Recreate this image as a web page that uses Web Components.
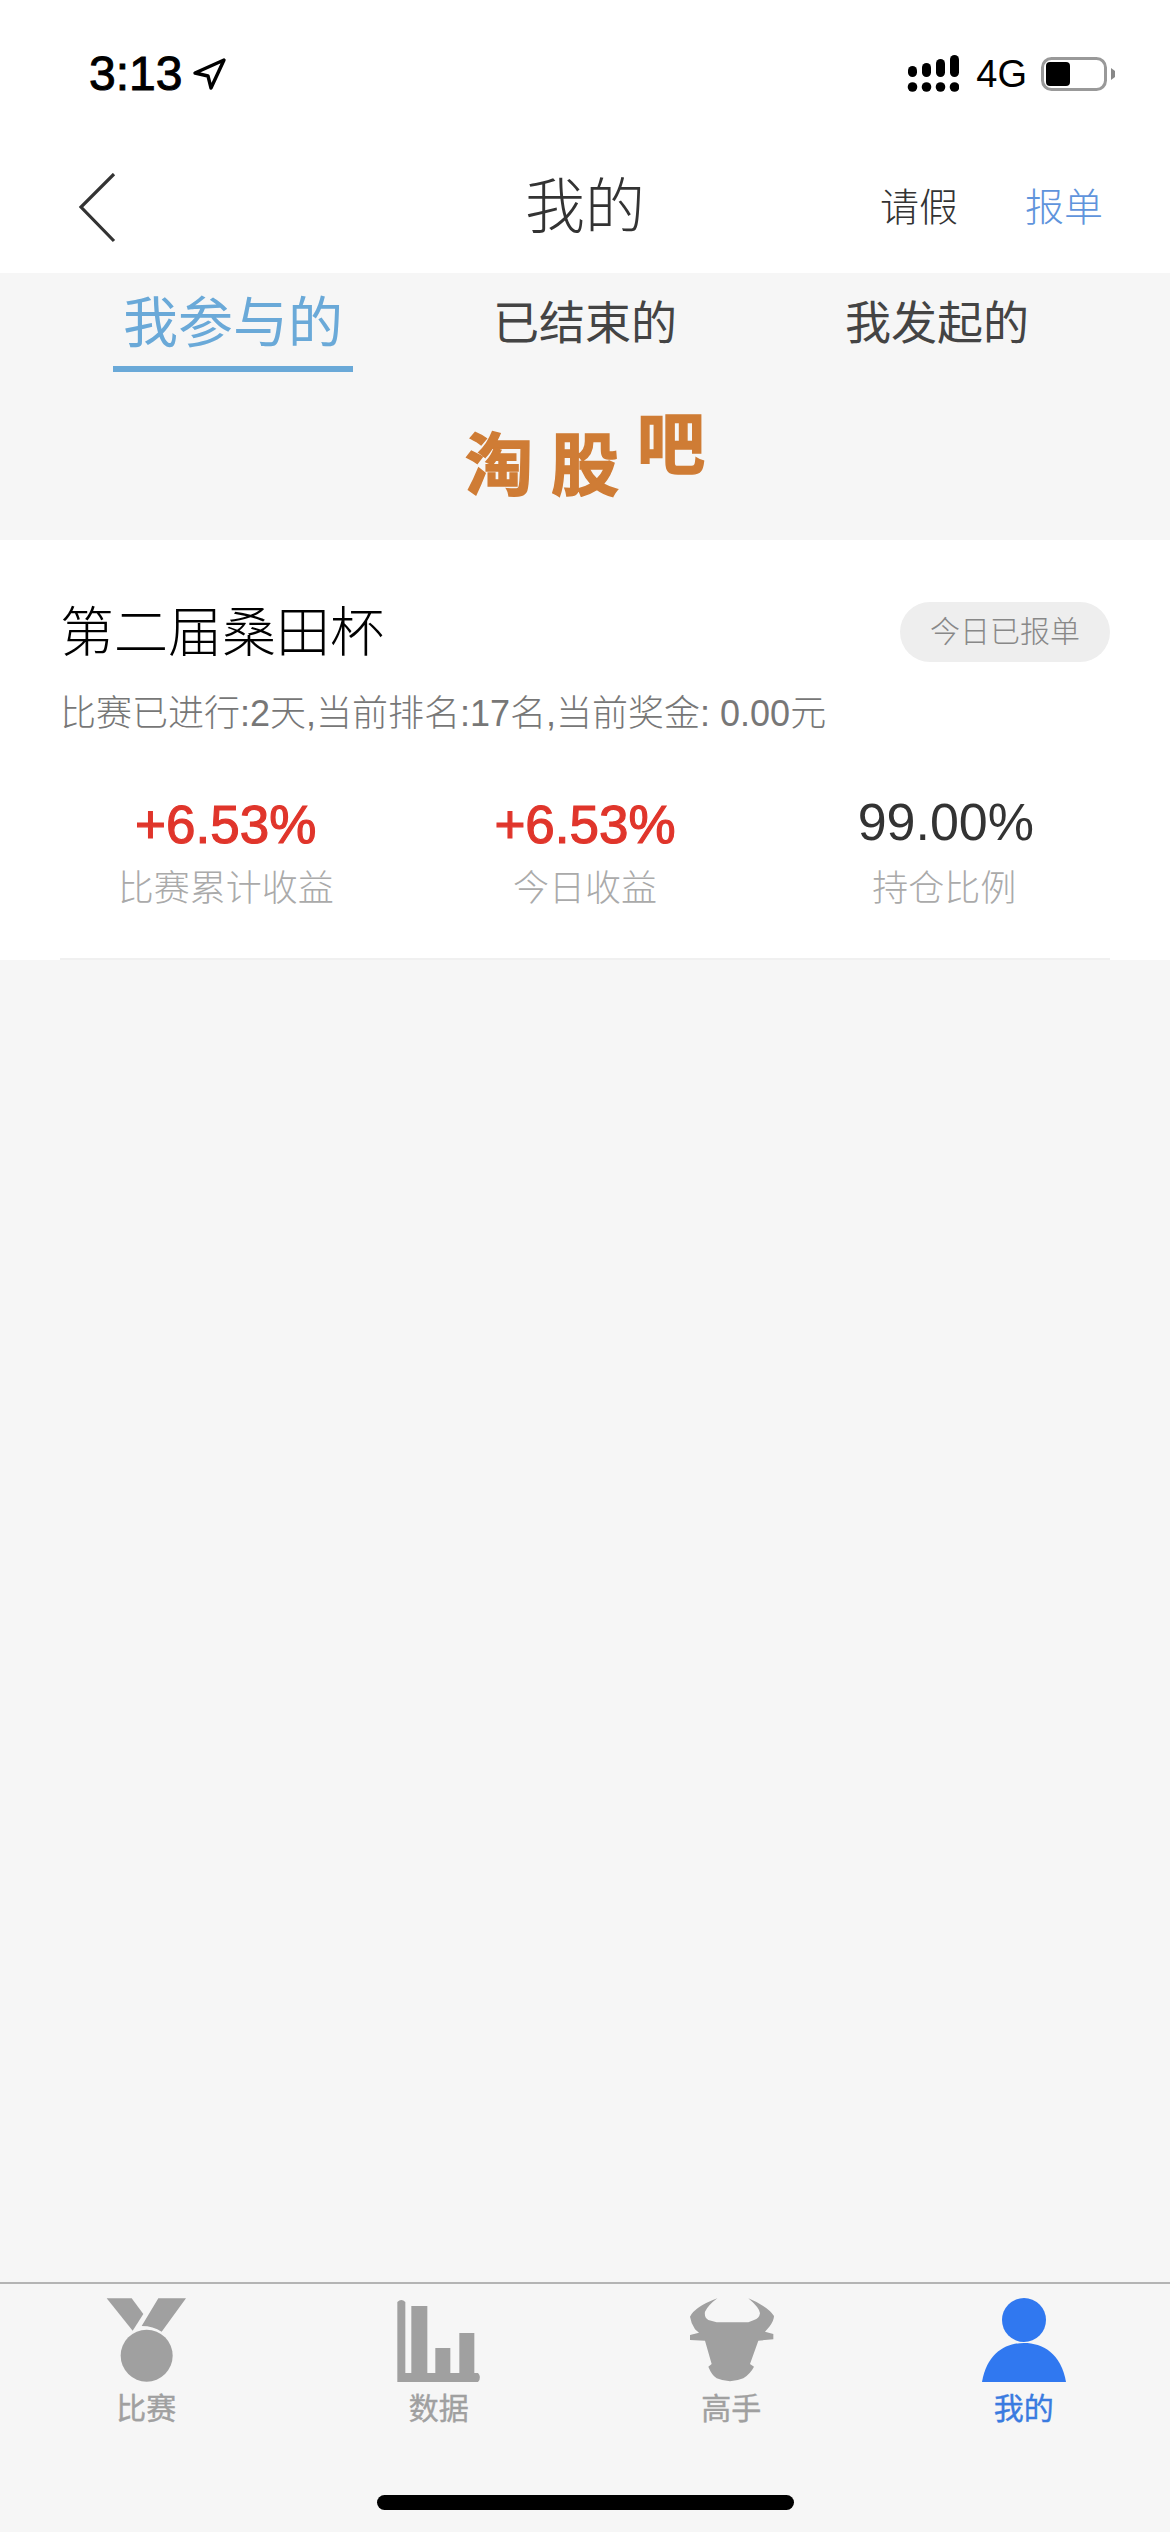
<!DOCTYPE html>
<html lang="zh">
<head>
<meta charset="utf-8">
<title>我的</title>
<style>
    html,body{margin:0;padding:0;}
    body{
        background:#f6f6f6;
        font-family:"Liberation Sans","Noto Sans CJK SC",sans-serif;
    }
</style>
</head>
<body>
    <app-shell>
        <status-bar slot="top"></status-bar>
        <nav-header slot="top" heading="我的"></nav-header>
        <tab-strip slot="top"></tab-strip>
        <logo-banner></logo-banner>
        <contest-card title-text="第二届桑田杯" badge="今日已报单" summary="比赛已进行:2天,当前排名:17名,当前奖金: 0.00元">
            <stat-item value="+6.53%" label="比赛累计收益" tone="up"></stat-item>
            <stat-item value="+6.53%" label="今日收益" tone="up"></stat-item>
            <stat-item value="99.00%" label="持仓比例"></stat-item>
        </contest-card>
        <bottom-bar slot="bottom">
            <bar-item label="比赛">
                <svg viewBox="0 0 312 300" width="104" height="100"><g transform="translate(8 0)"><path d="M30 25H105L140 72L108 122Z"/><path d="M185 25H268L195 125Q170 108 135 108Z"/><circle cx="150" cy="197" r="78"/></g></svg>
            </bar-item>
            <bar-item label="数据">
                <svg viewBox="0 0 312 300" width="104" height="100"><path d="M31 36Q43 24 55 36V249H73V48H121V249H145V174H190V249H217V129H262V249H273Q285 262 273 276H31Z"/></svg>
            </bar-item>
            <bar-item label="高手">
                <svg viewBox="0 0 312 300" width="104" height="100"><path transform="translate(3 0)" d="M112 25Q45 50 30 80Q33 100 45 118L57 128L30 135V150L75 152L95 222L85 230Q95 255 110 265Q150 282 190 265Q212 250 222 230L210 222L235 152L280 148V132L255 125L268 110Q282 92 282 78Q265 50 205 25Q240 55 240 70Q238 85 222 90L205 97H110L85 90Q72 82 75 65Q85 45 112 25Z"/></svg>
            </bar-item>
            <bar-item label="我的" active>
                <svg viewBox="0 0 312 300" width="104" height="100"><circle cx="156" cy="90" r="66"/><path d="M30 276C45 190 100 159 156 159S267 190 282 276Z"/></svg>
            </bar-item>
        </bottom-bar>
    </app-shell>

<script>
    class AppShell extends HTMLElement{
        constructor(){
            super();
            this.attachShadow({mode:'open'});
            this.shadowRoot.innerHTML = `
            <style>
                :host{display:flex;flex-direction:column;height:2532px;overflow:hidden;}
                main{flex:1;min-height:0;}
            </style>
            <slot name="top"></slot>
            <main><slot></slot></main>
            <slot name="bottom"></slot>`;
        }
    }

    class StatusBar extends HTMLElement{
        constructor(){
            super();
            this.attachShadow({mode:'open'});
            this.shadowRoot.innerHTML = `
            <style>
                :host{display:flex;align-items:center;justify-content:space-between;box-sizing:border-box;height:136px;padding:12px 55px 0 89px;background:#fff;color:#000;}
                .left,.right{display:flex;align-items:center;}
                .time{font-size:48px;line-height:50px;-webkit-text-stroke:1px #000;}
                .arrow{margin-left:10px;}
                .net{font-size:38px;line-height:40px;margin:0 14px 0 17px;}
                svg{display:block;}
            </style>
            <div class="left">
                <span class="time">3:13</span>
                <svg class="arrow" width="36" height="34" viewBox="0 0 36 34"><path d="M32 3L3 16L16 19L19 31Z" fill="none" stroke="#000" stroke-width="3.4" stroke-linejoin="round"/></svg>
            </div>
            <div class="right">
                <svg width="52" height="38" viewBox="0 0 52 38">
                    <rect x="1" y="11" width="9" height="11" rx="4.5"/><rect x="15" y="8" width="9" height="14" rx="4.5"/><rect x="29" y="4" width="9" height="18" rx="4.5"/><rect x="43" y="0" width="9" height="22" rx="4.5"/>
                    <circle cx="5.5" cy="32" r="4.8"/><circle cx="19.5" cy="32" r="4.8"/><circle cx="33.5" cy="32" r="4.8"/><circle cx="47.5" cy="32" r="4.8"/>
                </svg>
                <span class="net">4G</span>
                <svg width="74" height="34" viewBox="0 0 74 34">
                    <rect x="1.5" y="1.5" width="63" height="31" rx="9" fill="none" stroke="#999" stroke-width="3"/>
                    <rect x="5" y="5" width="24" height="24" rx="4"/>
                    <path d="M70 11L74 14V20L70 23Z" fill="#888"/>
                </svg>
            </div>`;
        }
    }

    class NavHeader extends HTMLElement{
        constructor(){
            super();
            this.attachShadow({mode:'open'});
            this.shadowRoot.innerHTML = `
            <style>
                :host{display:grid;grid-template-columns:1fr auto 1fr;align-items:center;box-sizing:border-box;height:137px;padding:6px 67px 0 67px;background:#fff;color:#333;}
                svg{display:block;margin-left:11px;}
                h1{margin:0;font-size:60px;line-height:70px;font-weight:300;}
                .acts{display:flex;justify-content:flex-end;gap:67px;font-size:39px;line-height:50px;font-weight:300;}
                .blue{color:#5f94dc;}
            </style>
            <svg width="40" height="70" viewBox="0 0 40 70"><path d="M36 1L3 34L36 68" fill="none" stroke="#333" stroke-width="3.2"/></svg>
            <h1>${this.getAttribute('heading')}</h1>
            <div class="acts"><span>请假</span><span class="blue">报单</span></div>`;
        }
    }

    class TabStrip extends HTMLElement{
        constructor(){
            super();
            this.attachShadow({mode:'open'});
            this.shadowRoot.innerHTML = `
            <style>
                :host{display:grid;grid-template-columns:repeat(3,352px);box-sizing:border-box;height:99px;padding-left:57px;color:#444;font-size:46px;}
                div{display:flex;justify-content:center;}
                span{box-sizing:border-box;height:99px;line-height:100px;white-space:nowrap;}
                .on{width:240px;text-align:center;color:#6aa9d8;font-size:55px;border-bottom:6px solid #6aa9d8;}
            </style>
            <div><span class="on">我参与的</span></div>
            <div><span>已结束的</span></div>
            <div><span>我发起的</span></div>`;
        }
    }

    class LogoBanner extends HTMLElement{
        constructor(){
            super();
            this.attachShadow({mode:'open'});
            this.shadowRoot.innerHTML = `
            <style>
                :host{display:flex;justify-content:center;align-items:center;gap:18px;box-sizing:border-box;height:168px;padding-top:20px;color:#cf7c35;font-size:68px;line-height:72px;font-weight:700;-webkit-text-stroke:1.5px #cf7c35;}
                .up{margin-bottom:42px;}
            </style>
            <span>淘</span><span>股</span><span class="up">吧</span>`;
        }
    }

    class ContestCard extends HTMLElement{
        constructor(){
            super();
            this.attachShadow({mode:'open'});
            this.shadowRoot.innerHTML = `
            <style>
                :host{display:flex;flex-direction:column;box-sizing:border-box;height:420px;padding:62px 60px 0 60px;background:#fff;}
                .head{display:flex;justify-content:space-between;align-items:center;height:60px;}
                .name{font-size:54px;line-height:60px;color:#000;font-weight:300;margin-top:2px;}
                .badge{box-sizing:border-box;width:210px;height:60px;border-radius:30px;background:#eee;color:#888;font-size:30px;line-height:60px;text-align:center;font-weight:300;}
                .sum{margin:27px 0 0;font-size:36px;line-height:50px;color:#777;white-space:nowrap;font-weight:300;}
                .stats{display:grid;grid-template-columns:repeat(3,1fr);margin:56px -14px 0 -14px;}
                .rule{margin-top:auto;height:2px;background:#f0f0f0;}
            </style>
            <div class="head"><span class="name">${this.getAttribute('title-text')}</span><span class="badge">${this.getAttribute('badge')}</span></div>
            <p class="sum">${this.getAttribute('summary')}</p>
            <div class="stats"><slot></slot></div>
            <div class="rule"></div>`;
        }
    }

    class StatItem extends HTMLElement{
        constructor(){
            super();
            this.attachShadow({mode:'open'});
            const up = this.getAttribute('tone') === 'up';
            this.shadowRoot.innerHTML = `
            <style>
                :host{display:block;text-align:center;}
                .v{font-size:${up ? 53 : 52}px;line-height:60px;color:${up ? '#e0352b' : '#333'};${up ? '-webkit-text-stroke:1.2px #e0352b;' : 'margin-top:-3px;padding-bottom:3px;padding-left:3px;'}}
                .l{font-size:36px;line-height:50px;margin-top:9px;color:#aaa;font-weight:300;}
            </style>
            <div class="v">${this.getAttribute('value')}</div>
            <div class="l">${this.getAttribute('label')}</div>`;
        }
    }

    class BottomBar extends HTMLElement{
        constructor(){
            super();
            this.attachShadow({mode:'open'});
            this.shadowRoot.innerHTML = `
            <style>
                :host{display:block;box-sizing:border-box;height:250px;border-top:2px solid #b4b4b4;background:#f6f6f6;}
                .items{display:grid;grid-template-columns:repeat(4,1fr);height:209px;padding-top:6px;box-sizing:border-box;}
                .home{width:417px;height:15px;margin:2px auto 0;border-radius:8px;background:#000;}
            </style>
            <div class="items"><slot></slot></div>
            <div class="home"></div>`;
        }
    }

    class BarItem extends HTMLElement{
        constructor(){
            super();
            this.attachShadow({mode:'open'});
            const on = this.hasAttribute('active');
            const col = on ? '#3a7be0' : '#a0a0a0';
            this.shadowRoot.innerHTML = `
            <style>
                :host{display:flex;flex-direction:column;align-items:center;color:${col};fill:${on ? '#3078f0' : '#a0a0a0'};}
                ::slotted(svg){display:block;}
                span{font-size:30px;line-height:36px;margin-top:1px;-webkit-text-stroke:.4px ${col};}
            </style>
            <slot></slot>
            <span>${this.getAttribute('label')}</span>`;
        }
    }

    customElements.define('app-shell', AppShell);
    customElements.define('status-bar', StatusBar);
    customElements.define('nav-header', NavHeader);
    customElements.define('tab-strip', TabStrip);
    customElements.define('logo-banner', LogoBanner);
    customElements.define('contest-card', ContestCard);
    customElements.define('stat-item', StatItem);
    customElements.define('bottom-bar', BottomBar);
    customElements.define('bar-item', BarItem);
</script>
</body>
</html>
